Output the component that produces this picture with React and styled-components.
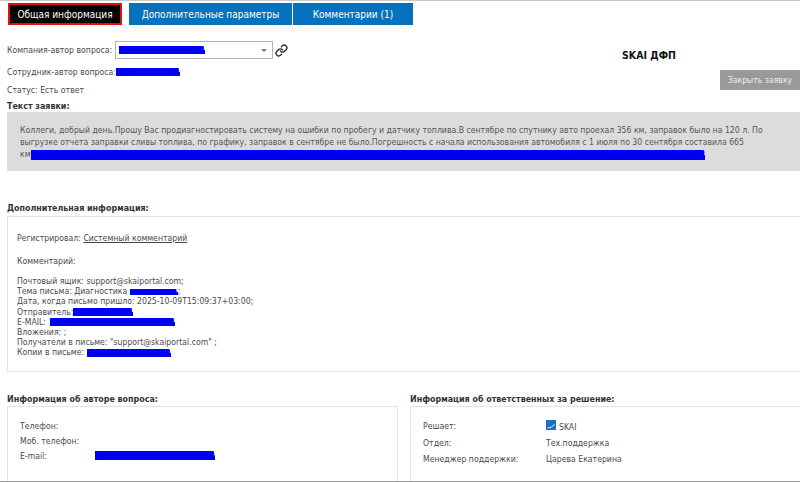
import React from 'react';
import styled, { createGlobalStyle } from 'styled-components';
import { Link as LinkGlyph } from 'lucide-react';

const GlobalStyle = createGlobalStyle`
  html, body {
    margin: 0;
    padding: 0;
    background: #fff;
    overflow: hidden;
  }
  body {
    font-family: "DejaVu Sans Condensed", "DejaVu Sans", sans-serif;
    font-stretch: condensed;
    font-size: 8.65px;
    color: #4a4a4a;
  }
`;

const Page = styled.div`
  width: 800px;
  height: 482px;
  box-sizing: border-box;
  border-top: 1px solid #c8c8c8;
  border-bottom: 1px solid #999;
  overflow: hidden;
  display: flex;
  flex-direction: column;

  & > * {
    flex: none;
  }
`;

const Tabs = styled.div`
  display: flex;
  height: 22px;
  margin: 2px 0 0 8px;
`;

const Tab = styled.div`
  box-sizing: border-box;
  width: ${(props) => props.$width}px;
  margin-right: ${(props) => props.$gap || 0}px;
  display: flex;
  align-items: center;
  justify-content: center;
  font-size: 10px;
  color: #fff;
  background: ${(props) => (props.$active ? '#000' : '#0672bb')};
  border: ${(props) => (props.$active ? '2px solid #e01010' : 'none')};
`;

const Header = styled.div`
  display: flex;
  justify-content: space-between;
  padding-left: 7px;
`;

const HeaderLeft = styled.div`
  display: flex;
  flex-direction: column;
  padding-top: 16px;
`;

const Row = styled.div`
  display: flex;
  align-items: center;
  height: ${(props) => props.$height}px;
  white-space: nowrap;
`;

const Select = styled.div`
  box-sizing: border-box;
  width: 158px;
  height: 18px;
  margin-left: 3px;
  padding: 0 5px 0 3px;
  display: flex;
  align-items: center;
  justify-content: space-between;
  border: 1px solid #b5b5b5;
  background: #fff;
`;

const Caret = styled.span`
  width: 0;
  height: 0;
  border-left: 3px solid transparent;
  border-right: 3px solid transparent;
  border-top: 3px solid #777;
`;

const LinkIcon = styled(LinkGlyph)`
  width: 13px;
  height: 13px;
  margin-left: 2px;
  color: #222;
  stroke-width: 2.4;
`;

const HeaderRight = styled.div`
  width: 302px;
  display: flex;
  flex-direction: column;
  padding-top: 23px;
`;

const Company = styled.div`
  text-align: center;
  font-size: 10.5px;
  font-weight: 700;
  color: #111;
  line-height: 14px;
`;

const CloseButton = styled.div`
  align-self: flex-end;
  box-sizing: border-box;
  width: 80px;
  height: 20px;
  margin-top: 8px;
  display: flex;
  align-items: center;
  justify-content: center;
  background: #999;
  color: #eee;
`;

const SectionTitle = styled.div`
  margin: ${(props) => props.$top}px 0 0 7px;
  font-size: 8.85px;
  font-weight: 700;
  color: #333;
  line-height: 12px;
`;

const RequestBox = styled.div`
  box-sizing: border-box;
  height: 59px;
  margin-left: 7px;
  padding: 12px 12px 0 13px;
  background: #dcdcdc;
  line-height: 12px;
  color: #555;
`;

const InfoBox = styled.div`
  box-sizing: border-box;
  height: 156px;
  margin: 2px 0 0 7px;
  padding: 16px 0 0 9px;
  border: 1px solid #e4e4e4;
  border-right: none;
  line-height: 10.2px;
`;

const InfoLine = styled.div`
  white-space: nowrap;
  margin-bottom: ${(props) => props.$after || 0}px;
  height: 10.2px;
`;

const PlainLink = styled.span`
  text-decoration: underline;
`;

const Columns = styled.div`
  display: grid;
  grid-template-columns: 391px 390px;
  column-gap: 12px;
  margin: 21px 0 0 7px;
`;

const Column = styled.div`
  display: flex;
  flex-direction: column;
`;

const ColumnTitle = styled.div`
  font-size: 8.85px;
  font-weight: 700;
  color: #333;
  line-height: 12px;
`;

const DetailBox = styled.div`
  box-sizing: border-box;
  height: 90px;
  margin-top: 1px;
  padding: 11px 0 0 ${(props) => props.$pad}px;
  border: 1px solid #e4e4e4;
  border-right: ${(props) => (props.$open ? 'none' : '1px solid #e4e4e4')};
`;

const DetailRow = styled.div`
  display: grid;
  grid-template-columns: ${(props) => props.$label}px 1fr;
  align-items: center;
  height: ${(props) => props.$height}px;
  white-space: nowrap;
`;

const Value = styled.span`
  display: flex;
  align-items: center;
  gap: 3px;
  padding-top: ${(props) => (props.$low ? 2 : 0)}px;
`;

const Logo = styled.svg`
  margin-top: -4px;
`;

const Mark = styled.svg`
  display: inline-block;
  vertical-align: middle;
  flex: none;
  margin-left: ${(props) => props.$shift || 0}px;
`;

const Scribble = ({ width, height = 6, lines = 2, shift }) => {
  const rows = Array.from({ length: lines }, (_, i) => {
    const y = ((i + 0.5) * height) / lines;
    return `M1.5 ${y} L${width - 1.5 - (lines - 1 - i) * 2} ${y}`;
  });
  return (
    <Mark width={width} height={height} $shift={shift} viewBox={`0 0 ${width} ${height}`}>
      <path d={rows.join(' ')} stroke="#0000f0" strokeWidth={(height / lines) + 1} strokeLinecap="round" fill="none" />
    </Mark>
  );
};

const SkaiLogo = () => (
  <Logo width="10" height="10" viewBox="0 0 10 10">
    <rect width="10" height="10" fill="#1f6fc4" />
    <path d="M1.5 8 Q6 8 8.5 4.5" stroke="#fff" strokeWidth="0.9" fill="none" />
  </Logo>
);

const App = () => (
  <Page>
    <GlobalStyle />
    <Tabs>
      <Tab $active $width={114} $gap={7}>Общая информация</Tab>
      <Tab $width={163} $gap={1}>Дополнительные параметры</Tab>
      <Tab $width={120}>Комментарии (1)</Tab>
    </Tabs>

    <Header>
      <HeaderLeft>
        <Row $height={18}>
          Компания-автор вопроса:
          <Select>
            <Scribble width={86} height={8} />
            <Caret />
          </Select>
          <LinkIcon />
        </Row>
        <Row $height={26}>
          Сотрудник-автор вопроса:
          <Scribble width={64} height={8} />
        </Row>
        <Row $height={10}>Статус: Есть ответ</Row>
      </HeaderLeft>
      <HeaderRight>
        <Company>SKAI ДФП</Company>
        <CloseButton>Закрыть заявку</CloseButton>
      </HeaderRight>
    </Header>

    <SectionTitle $top={5}>Текст заявки:</SectionTitle>
    <RequestBox>
      Коллеги, добрый день.Прошу Вас продиагностировать систему на ошибки по пробегу и датчику топлива.В сентябре по спутнику авто проехал 356 км, заправок было на 120 л. По
      <br />
      выгрузке отчета заправки сливы топлива, по графику, заправок в сентябре не было.Погрешность с начала использования автомобиля с 1 июля по 30 сентября составила 665
      <br />
      км
      <Scribble width={674} height={10} />
    </RequestBox>

    <SectionTitle $top={31}>Дополнительная информация:</SectionTitle>
    <InfoBox>
      <InfoLine $after={12.8}>Регистрировал: <PlainLink>Системный комментарий</PlainLink></InfoLine>
      <InfoLine $after={9.8}>Комментарий:</InfoLine>
      <InfoLine>Почтовый ящик: support@skaiportal.com;</InfoLine>
      <InfoLine>Тема письма: Диагностика <Scribble width={48} height={6} />;</InfoLine>
      <InfoLine>Дата, когда письмо пришло: 2025-10-09T15:09:37+03:00;</InfoLine>
      <InfoLine>Отправитель:<Scribble width={60} height={8} /></InfoLine>
      <InfoLine>E-MAIL: <Scribble width={125} height={8} shift={2} /></InfoLine>
      <InfoLine>Вложения: ;</InfoLine>
      <InfoLine>Получатели в письме: "support@skaiportal.com" ;</InfoLine>
      <InfoLine>Копии в письме: <Scribble width={84} height={8} /></InfoLine>
    </InfoBox>

    <Columns>
      <Column>
        <ColumnTitle>Информация об авторе вопроса:</ColumnTitle>
        <DetailBox $pad={12}>
          <DetailRow $label={75} $height={15}>Телефон:</DetailRow>
          <DetailRow $label={75} $height={15}>Моб. телефон:</DetailRow>
          <DetailRow $label={75} $height={15}>
            E-mail:
            <Scribble width={120} height={9} />
          </DetailRow>
        </DetailBox>
      </Column>
      <Column>
        <ColumnTitle>Информация об ответственных за решение:</ColumnTitle>
        <DetailBox $pad={12} $open>
          <DetailRow $label={123} $height={16.4}>
            Решает:
            <Value $low><SkaiLogo />SKAI</Value>
          </DetailRow>
          <DetailRow $label={123} $height={16.4}>Отдел:<Value>Тех.поддержка</Value></DetailRow>
          <DetailRow $label={123} $height={16.4}>Менеджер поддержки:<Value>Царева Екатерина</Value></DetailRow>
        </DetailBox>
      </Column>
    </Columns>
  </Page>
);

export default App;
